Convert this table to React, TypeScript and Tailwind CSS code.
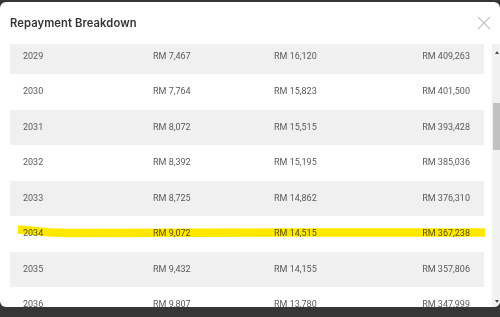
import React from 'react'

const ROWS = [
    ['2029', 'RM 7,467', 'RM 16,120', 'RM 409,263'],
    ['2030', 'RM 7,764', 'RM 15,823', 'RM 401,500'],
    ['2031', 'RM 8,072', 'RM 15,515', 'RM 393,428'],
    ['2032', 'RM 8,392', 'RM 15,195', 'RM 385,036'],
    ['2033', 'RM 8,725', 'RM 14,862', 'RM 376,310'],
    ['2034', 'RM 9,072', 'RM 14,515', 'RM 367,238'],
    ['2035', 'RM 9,432', 'RM 14,155', 'RM 357,806'],
    ['2036', 'RM 9,807', 'RM 13,780', 'RM 347,999'],
]

export default function App() {
    return (
        <div className="relative w-[500px] h-[317px] bg-[#363636] overflow-hidden">
            <div className="mt-[2px] h-[305px] w-[500px] bg-white rounded-[6px] flex flex-col overflow-hidden">
                {/* header */}
                <div className="h-[42px] shrink-0 flex items-center justify-between pl-[10px] pr-[8px]">
                    <h2 className="text-[11.2px] font-semibold text-[#333] font-['Inter',sans-serif] tracking-[0.1px]">
                        Repayment Breakdown
                    </h2>
                    <svg width="14" height="14" viewBox="0 0 14 14" className="mr-[1px]">
                        <path d="M1 1 L13 13 M13 1 L1 13" stroke="#c4c4c4" strokeWidth="1.2" fill="none" />
                    </svg>
                </div>

                {/* body */}
                <div className="flex flex-1 min-h-0">
                    <div className="flex-1 overflow-hidden pl-[10px] pr-[8px]">
                        <div className="-mt-[5.5px] font-['Roboto',sans-serif] text-[9px] text-[#5a5a5a]">
                            {ROWS.map((r, i) => (
                                <div
                                    key={r[0]}
                                    className={`h-[35.5px] grid grid-cols-[130px_121px_1fr_auto] items-center pl-[13px] pr-[14px] ${i % 2 === 0 ? 'bg-[#f0f0f0]' : 'bg-white'}`}
                                >
                                    <span>{r[0]}</span>
                                    <span>{r[1]}</span>
                                    <span>{r[2]}</span>
                                    <span className="text-right">{r[3]}</span>
                                </div>
                            ))}
                        </div>
                    </div>
                    {/* scrollbar */}
                    <div className="w-[8px] shrink-0 bg-[#f1f1f1] flex flex-col items-center">
                        <div className="h-[16px] flex items-center justify-center pl-[2px]">
                            <div className="w-0 h-0 border-l-[2.5px] border-r-[2.5px] border-b-[3px] border-l-transparent border-r-transparent border-b-[#505050]" />
                        </div>
                        <div className="mt-[43px] h-[47px] w-full pl-[1px]">
                            <div className="h-full w-full bg-[#c1c1c1]" />
                        </div>
                        <div className="flex-1" />
                        <div className="h-[12px] flex items-center justify-center pl-[2px]">
                            <div className="w-0 h-0 border-l-[2.5px] border-r-[2.5px] border-t-[3px] border-l-transparent border-r-transparent border-t-[#505050]" />
                        </div>
                    </div>
                </div>
            </div>

            {/* highlighter stroke */}
            <svg
                className="absolute inset-0 pointer-events-none mix-blend-multiply"
                width="500"
                height="317"
                viewBox="0 0 500 317"
            >
                <path
                    d="M18 229.5 C 30 230, 45 233, 68 233 L 300 232.5 L 485 232.5"
                    stroke="#ffe800"
                    strokeWidth="8.5"
                    fill="none"
                />
            </svg>
        </div>
    )
}
